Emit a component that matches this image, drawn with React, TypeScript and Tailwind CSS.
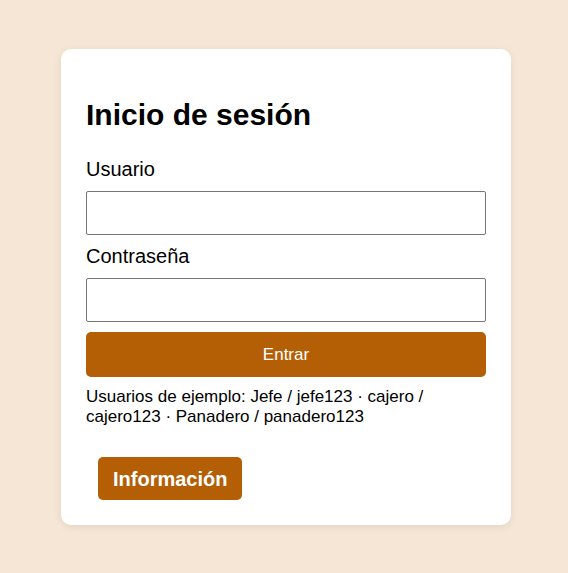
export default function App() {
  return (
    <div
      className="min-h-[573px] w-full bg-[#f5e6d6] flex justify-center pt-[49px] pl-[4px]"
      style={{ fontFamily: '"Liberation Sans", Arial, sans-serif' }}
    >
      <div className="w-[450px] h-[476px] bg-white rounded-[10px] shadow-[0_2px_8px_rgba(0,0,0,0.08)] px-[25px] pt-[48px]">
        <h2 className="text-[30px] font-bold leading-[36px] text-black">Inicio de sesión</h2>

        <label className="block mt-[21px] text-[20px] leading-[30px] text-black">Usuario</label>
        <input className="block mt-[7px] w-full h-[44px] border border-[#767676] rounded-[2px] px-2" />

        <label className="block mt-[6px] text-[20px] leading-[30px] text-black">Contraseña</label>
        <input
          type="password"
          className="block mt-[7px] w-full h-[44px] border border-[#767676] rounded-[2px] px-2"
        />

        <button className="block mt-[10px] w-full h-[45px] bg-[#b45f06] text-white text-[17px] rounded-[5px]">
          Entrar
        </button>

        <p className="mt-[10px] text-[17px] leading-[20px] text-black">
          Usuarios de ejemplo: Jefe / jefe123 · cajero / cajero123 · Panadero / panadero123
        </p>

        <button className="mt-[30px] ml-[12px] h-[43px] px-[15px] bg-[#b45f06] text-white text-[20px] font-bold rounded-[5px]">
          Información
        </button>
      </div>
    </div>
  );
}
